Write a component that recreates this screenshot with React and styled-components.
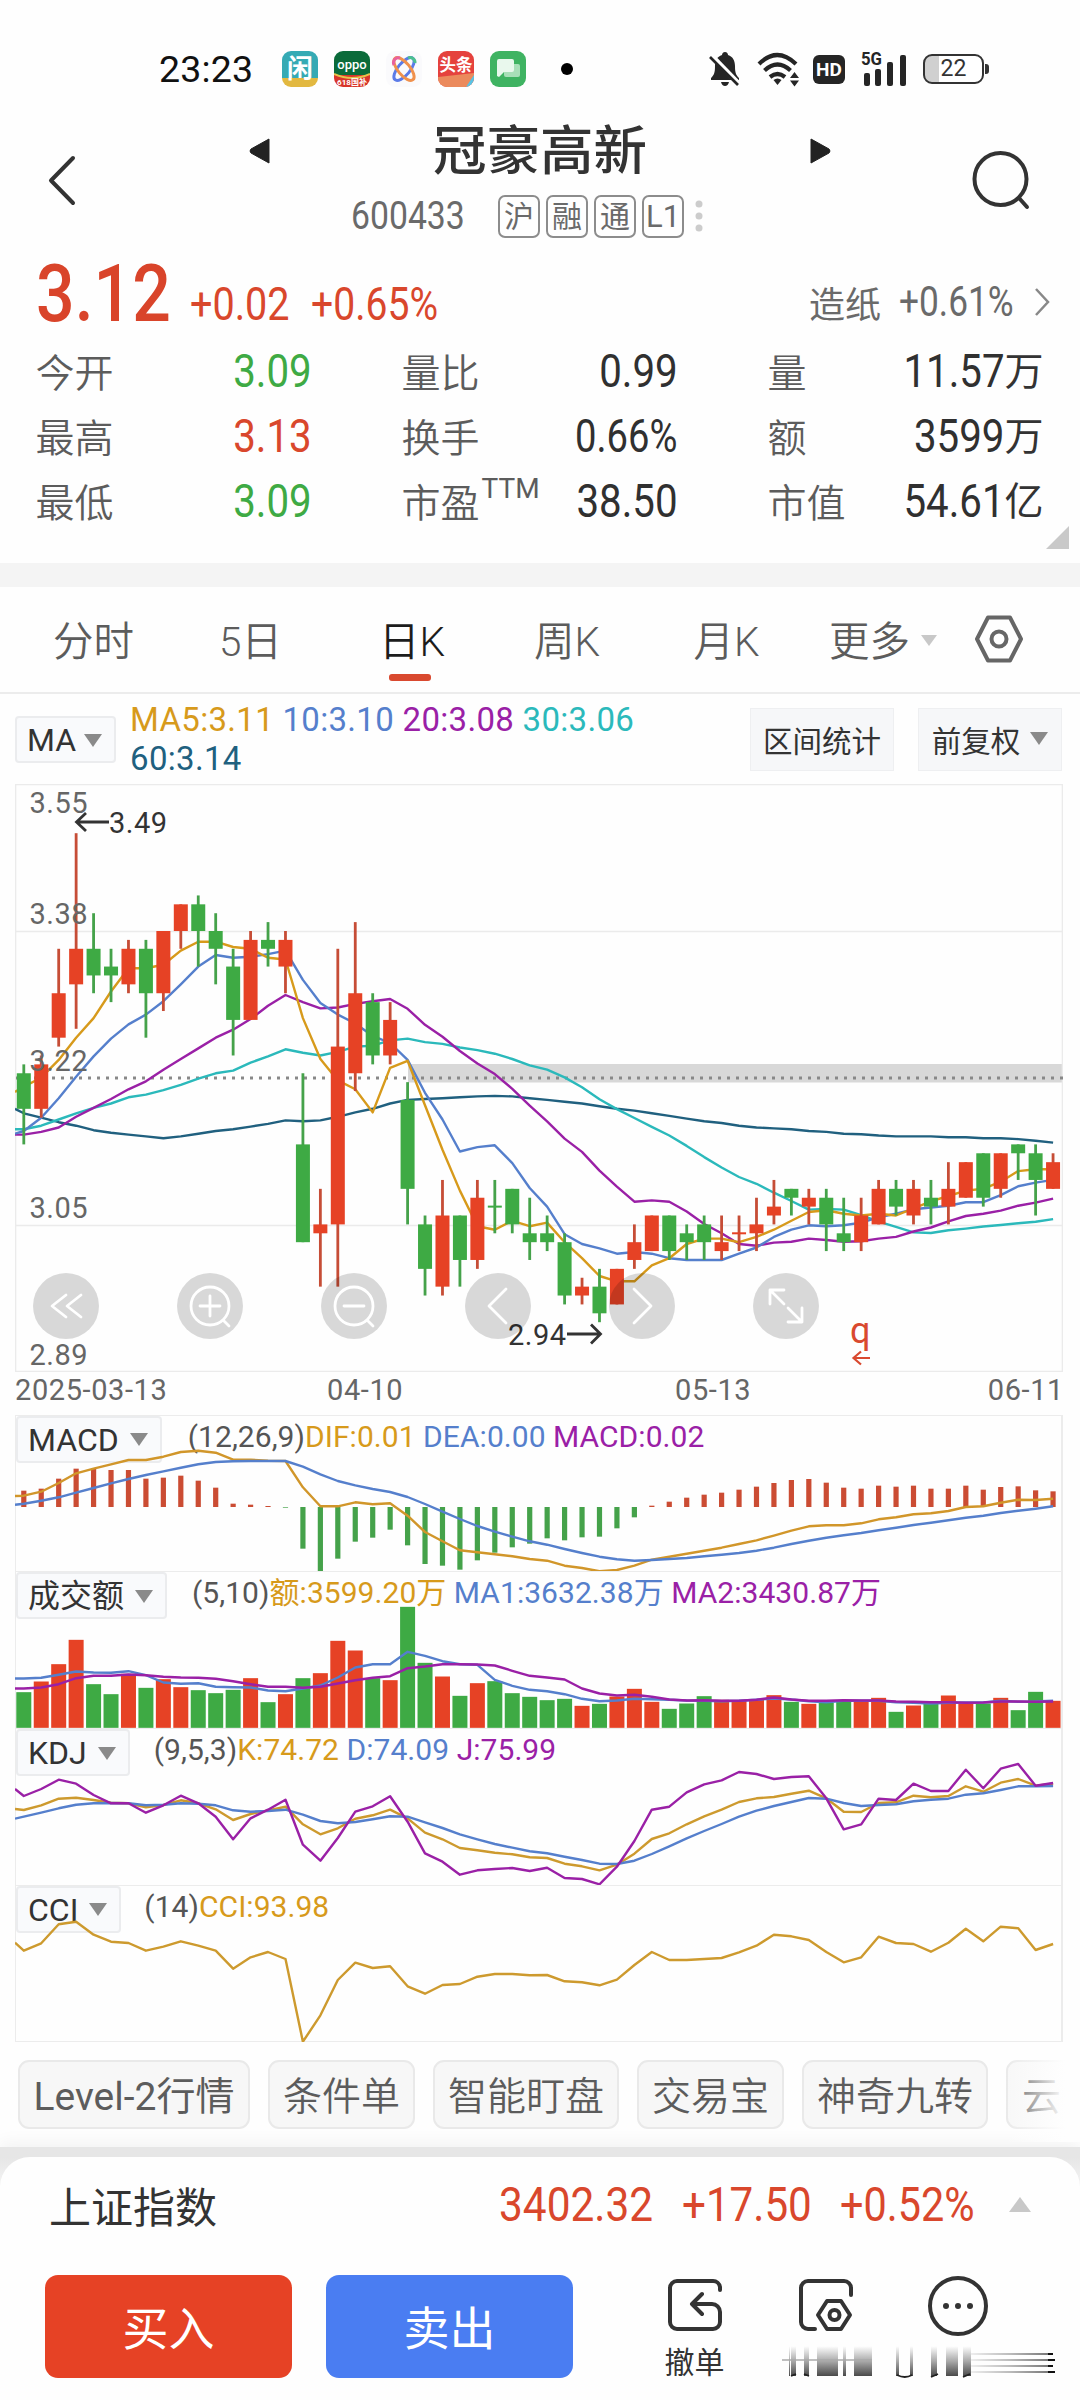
import React from 'react';
import styled, { createGlobalStyle } from 'styled-components';

const RED = '#e64225';
const GREEN = '#3eaa44';
const GOLD = '#d79a1b';
const BLUE = '#557fcc';
const PURPLE = '#9a20a6';
const CYAN = '#2bb9bb';
const NAVY = '#20607f';

const GlobalStyle = createGlobalStyle`
  * {
    box-sizing: border-box;
  }
  body {
    margin: 0;
    background: #fefefe;
    font-family: Roboto, 'Noto Sans CJK SC', sans-serif;
    color: #333;
    white-space: nowrap;
  }
  svg {
    display: block;
    flex: none;
  }
`;

const Page = styled.div`
  display: flex;
  flex-direction: column;
  width: 1080px;
  height: 2400px;
  overflow: hidden;
`;

/* condensed figures */
const Num = styled.span`
  display: block;
  flex: none;
  width: ${p => (p.$w ? `${p.$w}px` : 'auto')};
  font-size: ${p => p.$size || 46}px;
  font-weight: ${p => p.$weight || 400};
  line-height: 1;
  color: ${p => p.$color || '#303030'};
  transform: scaleX(${p => p.$scale || 0.86});
  transform-origin: ${p => (p.$right ? 'right' : 'left')} center;
`;

/* ---------- status bar ---------- */

const StatusBar = styled.div`
  display: flex;
  align-items: center;
  height: 108px;
  padding: 32px 0 2px 159px;
`;

const Clock = styled.div`
  width: 123px;
  font-size: 37.5px;
  letter-spacing: 0.2px;
  color: #111;
`;

const AppIcons = styled.div`
  display: flex;
  gap: 16px;
`;

const AppIcon = styled.div`
  display: flex;
  flex-direction: column;
  align-items: center;
  justify-content: center;
  width: 36px;
  height: 36px;
  border-radius: 9px;
  overflow: hidden;
  background: ${p => p.$bg};
  color: #fff;
  font-size: ${p => p.$size || 20}px;
  font-weight: 700;
  line-height: 1;
`;

const Dot = styled.div`
  width: 12px;
  height: 12px;
  margin: 0 135px 0 35px;
  border-radius: 50%;
  background: #000;
`;

const Hd = styled.div`
  width: 32px;
  height: 29px;
  margin: 0 15px 0 11px;
  border-radius: 6px;
  background: #252525;
  color: #fff;
  font-size: 19px;
  font-weight: 700;
  line-height: 29px;
  text-align: center;
`;

const Battery = styled.div`
  width: 61px;
  height: 30px;
  margin-left: 14px;
  border: 2.5px solid #333;
  border-radius: 9px;
  background: linear-gradient(90deg, #d0d0d0 24%, #fff 24%);
  font-size: 23px;
  line-height: 25px;
  text-align: center;
`;

const BatteryNub = styled.div`
  width: 4px;
  height: 10px;
  margin-left: 1px;
  border-radius: 0 3px 3px 0;
  background: #333;
`;

function Status() {
  return (
    <StatusBar>
      <Clock>23:23</Clock>
      <AppIcons>
        <AppIcon $bg="linear-gradient(#35aab4 76%, #e2b840 76%)" $size={26}>闲</AppIcon>
        <AppIcon $bg="linear-gradient(#0b6b3a 66%, #d8352a 66%)">
          <svg width="36" height="36" viewBox="0 0 36 36">
            <text x="18" y="18" textAnchor="middle" fill="#fff" fontSize="13" fontWeight="500">oppo</text>
            <path d="M0 23q18 8 36 0" stroke="#e5c34a" strokeWidth="2" fill="none" />
            <text x="18" y="34" textAnchor="middle" fill="#fff" fontSize="8">618国补</text>
          </svg>
        </AppIcon>
        <AppIcon $bg="#fafafc">
          <svg width="36" height="36" viewBox="0 0 36 36" fill="none" strokeWidth="3">
            <ellipse cx="18" cy="18" rx="6" ry="14" stroke="#5b7be8" transform="rotate(40 18 18)" />
            <ellipse cx="18" cy="18" rx="6" ry="14" stroke="#f0914d" transform="rotate(-40 18 18)" />
            <path d="M8 14a5 5 0 0 1 6-7" stroke="#e9619c" />
            <path d="M22 7a5 5 0 0 1 7 5" stroke="#4cc08f" />
          </svg>
        </AppIcon>
        <AppIcon $bg="#e5423d">
          <svg width="36" height="36" viewBox="0 0 36 36">
            <text x="18" y="20" textAnchor="middle" fill="#fff" fontSize="16.500" fontWeight="700">头条</text>
            <path d="M0 26l36-4v14H0z" fill="#eb8a5c" />
            <path d="M28 36l8-12v12z" fill="#58c3e6" />
          </svg>
        </AppIcon>
        <AppIcon $bg="#3fb362">
          <svg width="36" height="36" viewBox="0 0 36 36">
            <rect x="14" y="13" width="16" height="13" rx="2" fill="#a8dfb8" />
            <path d="M9 8h13a2 2 0 0 1 2 2v9a2 2 0 0 1-2 2H14l-5 5-2-1V10a2 2 0 0 1 2-2z" fill="#e9f8ed" />
          </svg>
        </AppIcon>
      </AppIcons>
      <Dot />
      <svg width="34" height="36" viewBox="0 0 34 36">
        <path d="M17 1c2 0 3 1.500 3 3 5 1.500 7 6 7 11 0 7 1 9 4 12v2H3v-2c3-3 4-5 4-12 0-5 2-9.500 7-11 0-1.500 1-3 3-3z" fill="#252525" />
        <path d="M13 31h8q-1 4-4 4t-4-4z" fill="#252525" />
        <path d="M3 4l28 29" stroke="#fff" strokeWidth="5" />
        <path d="M2 6l28 28" stroke="#252525" strokeWidth="2.600" />
      </svg>
      <svg width="46" height="36" viewBox="0 0 46 36" style={{ marginLeft: 14 }} fill="none" stroke="#252525" strokeWidth="4.200">
        <path d="M3 13q18-18 37 0" />
        <path d="M8.500 19.500q13-12 26 0" />
        <path d="M14 26q7.500-6 15 0" />
        <path d="M17.500 29l4 5 4-5q-4-3-8 0z" fill="#252525" stroke="none" />
        <path d="M34 27l4.500-6 4.500 6zM34 29.500l4.500 6 4.500-6z" fill="#252525" stroke="none" />
      </svg>
      <Hd>HD</Hd>
      <svg width="50" height="40" viewBox="-2 -2 50 40" fill="#252525" style={{ marginLeft: -1 }}>
        <text x="0" y="14" fontSize="18" fontWeight="700" textLength="21" lengthAdjust="spacingAndGlyphs">5G</text>
        <rect x="3" y="22" width="6" height="13" rx="2" />
        <rect x="14" y="18" width="6" height="17" rx="2" />
        <rect x="26" y="11" width="6" height="24" rx="2" />
        <rect x="39" y="4" width="6" height="31" rx="2" />
      </svg>
      <Battery>22</Battery>
      <BatteryNub />
    </StatusBar>
  );
}

/* ---------- title ---------- */

const TitleBar = styled.div`
  display: flex;
  height: 132px;
  padding: 0 48px 0 46px;
`;

const TitleCenter = styled.div`
  display: flex;
  flex: none;
  flex-direction: column;
  width: 582px;
  margin: 0 139px 0 171px;
`;

const NameRow = styled.div`
  display: flex;
  align-items: center;
  justify-content: space-between;
  height: 86px;
`;

const StockName = styled.div`
  font-family: 'Noto Sans CJK SC', sans-serif;
  font-size: 53.5px;
  font-weight: 500;
  line-height: 76px;
  margin-top: -8px;
`;

const CodeRow = styled.div`
  display: flex;
  align-items: center;
  height: 44px;
  padding-left: 102px;
`;

const Badge = styled.div`
  width: 42px;
  height: 43px;
  margin-right: 6px;
  border: 2px solid #8c8c8c;
  border-radius: 7px;
  color: #6a6a6a;
  font-size: ${p => (p.$latin ? 31 : 30)}px;
  line-height: 39px;
  text-align: center;
`;

function Title() {
  return (
    <TitleBar>
      <svg width="32" height="56" viewBox="0 0 32 56" style={{ marginTop: 45 }}>
        <path d="M27 5L5 27.500 27 50" fill="none" stroke="#333" strokeWidth="4" strokeLinecap="round" strokeLinejoin="round" />
      </svg>
      <TitleCenter>
        <NameRow>
          <svg width="22" height="26" viewBox="0 0 22 26">
            <path d="M20 1v24L2 15q-2-2 0-4z" fill="#222" stroke="#222" strokeLinejoin="round" />
          </svg>
          <StockName>冠豪高新</StockName>
          <svg width="22" height="26" viewBox="0 0 22 26">
            <path d="M2 1v24l18-10q2-2 0-4z" fill="#222" stroke="#222" strokeLinejoin="round" />
          </svg>
        </NameRow>
        <CodeRow>
          <Num $size={39} $w={147} $color="#6a6a6a" $scale={0.865}>600433</Num>
          <Badge>沪</Badge>
          <Badge>融</Badge>
          <Badge>通</Badge>
          <Badge $latin>L1</Badge>
          <svg width="12" height="34" viewBox="0 0 12 34" fill="#ccc" style={{ marginLeft: 3 }}>
            <circle cx="6" cy="5" r="3.500" />
            <circle cx="6" cy="17" r="3.500" />
            <circle cx="6" cy="29" r="3.500" />
          </svg>
        </CodeRow>
      </TitleCenter>
      <svg width="62" height="62" viewBox="0 0 62 62" style={{ marginTop: 41 }} fill="none" stroke="#333" strokeWidth="4" strokeLinecap="round">
        <circle cx="30.500" cy="30" r="26" />
        <path d="M49 49l8 9" />
      </svg>
    </TitleBar>
  );
}

/* ---------- quote ---------- */

const Quote = styled.div`
  height: 323px;
  padding: 0 11px 0 35.5px;
`;

const PriceRow = styled.div`
  display: flex;
  align-items: flex-end;
  height: 87px;
`;

const Industry = styled.div`
  display: flex;
  align-items: center;
  height: 52px;
  margin: 0 17px -1px auto;
  font-size: 36px;
  color: #6a6a6a;
`;

const StatGrid = styled.div`
  display: grid;
  grid-template-columns: repeat(3, 276px);
  grid-auto-rows: 65px;
  column-gap: 90px;
  margin-top: 11px;
`;

const Stat = styled.div`
  display: flex;
  align-items: center;
  justify-content: space-between;
`;

const StatLabel = styled.div`
  margin-top: -2px;
  font-family: 'Noto Sans CJK SC', sans-serif;
  font-size: 39px;
  font-weight: 350;
  line-height: 60px;
  color: #5c5c5c;
  sup {
    margin-left: 2px;
    font-family: Roboto, sans-serif;
    font-size: 28px;
    font-weight: 400;
    line-height: 0;
    vertical-align: 19px;
  }
`;

const StatValue = styled.div`
  display: flex;
  align-items: center;
`;

const Unit = styled.span`
  margin-top: -5px;
  font-size: 39px;
`;

const Corner = styled.div`
  width: 0;
  height: 0;
  margin: -7px 0 0 auto;
  border-left: 23px solid transparent;
  border-bottom: 23px solid #c9c9c9;
`;

const STATS = [
  ['今开', '3.09', '', GREEN],
  ['量比', '0.99', ''],
  ['量', '11.57', '万'],
  ['最高', '3.13', '', '#d9472c'],
  ['换手', '0.66%', ''],
  ['额', '3599', '万'],
  ['最低', '3.09', '', GREEN],
  ['市盈', '38.50', ''],
  ['市值', '54.61', '亿'],
];

function QuotePanel() {
  return (
    <Quote>
      <PriceRow>
        <Num $size={80} $w={154} $weight={500} $color="#d9442a" $scale={0.85} style={{ marginBottom: -7 }}>3.12</Num>
        <Num $w={121} $color="#d9472c">+0.02</Num>
        <Num $color="#d9472c" $scale={0.85}>+0.65%</Num>
        <Industry>
          造纸
          <Num $size={42} $w={135} $color="#6a6a6a" $scale={0.84} style={{ marginLeft: 18 }}>+0.61%</Num>
          <svg width="18" height="32" viewBox="0 0 18 32">
            <path d="M2 3l12 13L2 29" fill="none" stroke="#888" strokeWidth="2.500" />
          </svg>
        </Industry>
      </PriceRow>
      <StatGrid>
        {STATS.map(([label, value, unit, color], i) => (
          <Stat key={i}>
            <StatLabel>
              {label}
              {label === '市盈' && <sup>TTM</sup>}
            </StatLabel>
            <StatValue>
              <Num $right $color={color} $scale={value.endsWith('%') ? 0.83 : 0.875}>{value}</Num>
              {unit && <Unit>{unit}</Unit>}
            </StatValue>
          </Stat>
        ))}
      </StatGrid>
      <Corner />
    </Quote>
  );
}

const Band = styled.div`
  height: 24px;
  background: #f4f4f4;
`;

/* ---------- period tabs ---------- */

const Tabs = styled.div`
  display: flex;
  height: 107px;
  border-bottom: 2px solid #ececec;
`;

const Tab = styled.div`
  display: flex;
  flex: none;
  flex-direction: column;
  align-items: center;
  width: ${p => p.$w}px;
  padding-top: 23px;
  font-size: 40.5px;
  line-height: 64px;
  font-weight: 350;
  color: ${p => (p.$active ? '#1c1c1c' : '#5c5c5c')};
  &::after {
    content: '';
    width: 42px;
    height: 7px;
    margin: 0 5px 0 0;
    border-radius: 3px;
    background: ${p => (p.$active ? '#d9492f' : 'transparent')};
  }
`;

const Triangle = styled.span`
  display: block;
  flex: none;
  width: 0;
  height: 0;
  border-left: ${p => p.$size || 8}px solid transparent;
  border-right: ${p => p.$size || 8}px solid transparent;
  border-top: ${p => (p.$size || 8) * 1.45}px solid ${p => p.$color || '#8a8a8a'};
`;

function PeriodTabs() {
  return (
    <Tabs>
      <Tab $w={187}>分时</Tab>
      <Tab $w={127}>5日</Tab>
      <Tab $w={196} $active>日K</Tab>
      <Tab $w={114}>周K</Tab>
      <Tab $w={205}>月K</Tab>
      <Tab $w={81}>更多</Tab>
      <Triangle style={{ margin: '48px 0 0 11px' }} $color="#c8c8c8" />
      <svg width="50" height="50" viewBox="0 0 50 50" style={{ margin: '27px 0 0 37px' }} fill="none" stroke="#666" strokeWidth="4" strokeLinejoin="round">
        <path d="M14 3.500h22L47 25 36 46.500H14L3 25z" />
        <circle cx="25" cy="25" r="7.500" />
      </svg>
    </Tabs>
  );
}

/* ---------- MA toolbar ---------- */

const MaBar = styled.div`
  display: flex;
  height: 90px;
  padding: 14px 18px 0 15px;
`;

const Tag = styled.div`
  display: flex;
  align-items: center;
  gap: ${p => p.$gap || 11}px;
  height: 47px;
  padding: 1px 12px 0 10px;
  border: 2px solid #ebecee;
  border-radius: 4px;
  background: #f9fafc;
  font-size: 32px;
  line-height: 44px;
`;

const MaValues = styled.div`
  width: 615px;
  margin: -8px 0 0 14px;
  font-size: 33px;
  line-height: 39px;
  letter-spacing: 0.3px;
  white-space: normal;
`;

const Colored = styled.span`
  color: ${p => p.$color};
`;

const SquareButton = styled.div`
  display: flex;
  align-items: center;
  justify-content: center;
  gap: 10px;
  width: 144px;
  height: 63px;
  margin: 0 0 0 auto;
  padding-bottom: 2px;
  border: 1px solid #eeeff1;
  background: #f6f7f9;
  font-size: 29.5px;
  & + & {
    margin-left: 24px;
  }
`;

function MaToolbar() {
  return (
    <MaBar>
      <Tag $gap={8} style={{ marginTop: 8 }}>
        MA <Triangle $size={9} />
      </Tag>
      <MaValues>
        <Colored $color={GOLD}>MA5:3.11</Colored> <Colored $color={BLUE}>10:3.10</Colored>{' '}
        <Colored $color={PURPLE}>20:3.08</Colored> <Colored $color={CYAN}>30:3.06</Colored>
        <br />
        <Colored $color={NAVY}>60:3.14</Colored>
      </MaValues>
      <SquareButton>区间统计</SquareButton>
      <SquareButton>
        前复权 <Triangle $size={9} />
      </SquareButton>
    </MaBar>
  );
}

/* ---------- candles ---------- */

// [rising, high, bodyTop, bodyBottom, low], prices in cents
const CANDLES = [
  [0, 323, 322, 318, 314], [1, 324, 323, 318, 317], [1, 336, 331, 326, 325], [1, 349, 336, 332, 327],
  [0, 340, 336, 333, 331], [0, 336, 334, 333, 330], [1, 337, 336, 332, 331], [0, 337, 336, 331, 326],
  [1, 338, 338, 331, 329], [1, 341, 341, 338, 336], [0, 342, 341, 338, 334], [0, 340, 338, 336, 332],
  [0, 336, 334, 328, 324], [1, 338, 337, 328, 328], [0, 339, 337, 336, 334], [1, 338, 337, 334, 331],
  [0, 322, 314, 303, 303], [1, 309, 305, 304, 298], [1, 336, 325, 305, 298], [1, 339, 331, 322, 320],
  [0, 331, 330, 324, 323], [1, 330, 328, 324, 323], [0, 321, 319, 309, 305], [0, 306, 305, 300, 297],
  [1, 310, 306, 298, 297], [0, 306, 306, 301, 298], [1, 310, 308, 301, 300], [0, 310, 307, 307, 304],
  [0, 309, 309, 305, 304], [0, 308, 304, 303, 301], [0, 306, 304, 303, 302], [0, 304, 303, 297, 296],
  [1, 299, 298, 297, 296], [0, 300, 298, 295, 294], [1, 300, 300, 296, 296], [1, 305, 303, 301, 300],
  [1, 306, 306, 302, 302], [0, 306, 306, 302, 301], [0, 305, 304, 303, 301], [0, 306, 305, 303, 301],
  [1, 306, 303, 302, 301], [1, 306, 304, 304, 302], [1, 308, 305, 304, 302], [1, 310, 307, 306, 305],
  [0, 309, 309, 308, 306], [1, 309, 308, 307, 305], [0, 309, 308, 305, 302], [0, 308, 304, 303, 302],
  [1, 308, 306, 303, 302], [1, 310, 309, 305, 305], [0, 310, 309, 307, 306], [1, 310, 309, 306, 305],
  [0, 310, 308, 307, 305], [1, 312, 309, 307, 305], [1, 312, 312, 308, 308], [0, 313, 313, 308, 307],
  [1, 313, 313, 309, 308], [0, 314, 314, 313, 310], [0, 314, 313, 310, 306], [1, 313, 312, 309, 309],
];

const closes = CANDLES.map(c => (c[0] ? c[2] : c[3]));

// averages before the first visible window is complete
const SEED5 = [319.9, 320.5, 321.5, 323.5, 326];
const SEED10 = [315.2, 315.5, 317, 319.2, 321.6, 323.9, 325.9, 327.5, 328.6, 330.1];
const SEED20 = [
  315.1, 315.1, 315.4, 315.9, 317.1, 318.1, 319.1, 320.2, 321.1, 322.4, 323.6, 324.8, 326, 326.9, 328.1, 329.6, 330.8,
  330, 329.3, 329.4,
];
const SEED30 = [
  315.7, 315.7, 316.1, 316.8, 317.5, 318.1, 318.6, 319.3, 319.6, 320.1, 320.7, 321.4, 322, 322.3, 323.2, 323.9, 324.7,
  324.3, 324, 324.4, 325, 325.1, 325.7, 325.9, 325.5, 325.3, 324.9, 324.6, 324.2, 323.6,
];
const MA60 = [
  318, 317.5, 317, 316.5, 316.1, 315.6, 315.3, 315.1, 314.9, 314.7, 314.9, 315.2, 315.5, 315.7, 316, 316.3, 316.7,
  316.6, 316.7, 317.1, 317.6, 318, 318.6, 319, 319.1, 319.2, 319.3, 319.4, 319.45, 319.4, 319.2, 319, 318.8, 318.6,
  318.3, 318, 317.8, 317.5, 317.2, 316.9, 316.6, 316.4, 316.1, 315.9, 315.8, 315.7, 315.5, 315.4, 315.2, 315.15, 315,
  314.9, 314.9, 314.9, 314.8, 314.8, 314.7, 314.7, 314.6, 314.4, 314.2,
];

function average(n, seed) {
  const out = seed.slice();
  for (let i = n - 1; i < closes.length; i++) {
    out.push(closes.slice(i - n + 1, i + 1).reduce((a, b) => a + b, 0) / n);
  }
  return out;
}

const xAt = i => 8.8 + 17.445 * i;
const priceY = p => 49.2 + (349 - p) * 8.891;

// first value sits on the left edge, the rest on the candles
const toPoints = (values, y) => values.map((v, i) => `${i === 0 ? 0 : xAt(i - 1).toFixed(1)},${y(v).toFixed(1)}`).join(' ');

function Line({ values, y, color, width = 2.4 }) {
  return <polyline points={toPoints(values, y)} fill="none" stroke={color} strokeWidth={width} strokeLinejoin="round" />;
}

const ChartArea = styled.div`
  width: 1048px;
  margin-left: 15px;
`;

const PriceChart = styled.div`
  position: relative;
  height: 588px;
`;

const ToolRow = styled.div`
  position: absolute;
  left: 18px;
  top: 489px;
  display: flex;
  gap: 78px;
`;

const RoundTool = styled.div`
  width: 66px;
  height: 66px;
  border-radius: 50%;
  background: rgba(0, 0, 0, 0.15);
`;

const TOOLS = [
  'M33 22L19 33l14 11M48 22L34 33l14 11',
  'M52 33a19 19 0 1 0-38 0a19 19 0 1 0 38 0M46 47l6 6M23 33h20M33 23v20',
  'M52 33a19 19 0 1 0-38 0a19 19 0 1 0 38 0M46 47l6 6M23 33h20',
  'M41 16L24 33l17 17',
  'M25 16l17 17-17 17',
  'M17 31V17h14M17 17l14 14M35 35l14 14M49 35v14H35',
];

const Dates = styled.div`
  display: flex;
  height: 42.5px;
  padding-top: 4px;
  font-size: 29px;
  line-height: 29px;
  letter-spacing: 0.6px;
  color: #666;
`;

const DateLabel = styled.span`
  width: ${p => (p.$w ? `${p.$w}px` : 'auto')};
  &:last-child {
    margin: 0 -1px 0 auto;
  }
`;

function Candle({ data, i }) {
  const [up, high, top, bottom, low] = data;
  const x = xAt(i);
  const flat = top === bottom;
  const y = priceY(top);
  return (
    <g fill={up ? RED : GREEN}>
      <rect x={x - 1.4} y={priceY(high)} width="2.8" height={priceY(low) - priceY(high)} fill={up ? '#c64d36' : '#45a24a'} />
      <rect x={x - 7} y={flat ? y - 1 : y} width="14" height={flat ? 2 : priceY(bottom) - y} />
    </g>
  );
}

function Price() {
  return (
    <PriceChart>
      <svg width="1048" height="588" viewBox="0 0 1048 588" fontSize="29" letterSpacing="0.5">
        <rect x="393" y="280" width="654" height="18.500" fill="#d8d8d8" />
        <path d="M.5 .5h1047v587H.5zM0 147.500h1048M0 441.500h1048" fill="none" stroke="#ebebeb" strokeWidth="1.600" />
        <path d="M1 294h1047" stroke="#888" strokeWidth="3" strokeDasharray="3 6" />
        <Line values={MA60} y={priceY} color={NAVY} />
        <Line values={average(30, SEED30)} y={priceY} color={CYAN} />
        <Line values={average(20, SEED20)} y={priceY} color={PURPLE} />
        <Line values={average(10, SEED10)} y={priceY} color={BLUE} />
        <Line values={average(5, SEED5)} y={priceY} color={GOLD} />
        {CANDLES.map((c, i) => (
          <Candle key={i} data={c} i={i} />
        ))}
        <g fill="#666">
          <text x="14.500" y="28.500">3.55</text>
          <text x="14.500" y="139.500">3.38</text>
          <text x="14.500" y="286.500">3.22</text>
          <text x="14.500" y="433.500">3.05</text>
          <text x="14.500" y="580.500">2.89</text>
        </g>
        <g fill="#333">
          <text x="94" y="48.500">3.49</text>
          <text x="493" y="560.500">2.94</text>
        </g>
        <g fill="none" stroke="#333" strokeWidth="2.800">
          <path d="M94 38H62M71 29l-9.500 9 9.500 9" />
          <path d="M552 550h33M576 540.500l9.500 9.500-9.500 9.500" />
        </g>
        <text x="835" y="559" fill="#d9492f" fontSize="36">q</text>
        <path d="M855 574h-16M846 567.500l-7.500 6.500 7.500 6.500" fill="none" stroke="#d9492f" strokeWidth="2.200" />
      </svg>
      <ToolRow>
        {TOOLS.map((d, i) => (
          <RoundTool key={i}>
            <svg width="66" height="66" viewBox="0 0 66 66">
              <path d={d} fill="none" stroke="#fff" strokeWidth="2.800" strokeLinecap="round" strokeLinejoin="round" />
            </svg>
          </RoundTool>
        ))}
      </ToolRow>
    </PriceChart>
  );
}

/* ---------- indicators ---------- */

// indicator samples are kept in thirds of a pixel
const MACD_BARS = [
  270, 264, 234, 204, 203, 208, 208, 234, 231, 225, 240, 261, 309, 312, 316, 321, 444, 511, 474, 423, 411, 387, 434,
  490, 495, 507, 479, 456, 440, 429, 413, 419, 410, 408, 383, 350, 315, 303, 291, 282, 276, 267, 258, 247, 238, 235,
  246, 261, 264, 255, 258, 255, 264, 264, 255, 267, 259, 257, 269, 272,
];
const DIF = [
  286, 285, 273, 247, 218, 204, 191, 178, 178, 168, 154, 150, 156, 177, 177, 180, 181, 260, 317, 317, 305, 311, 308,
  345, 394, 422, 449, 455, 461, 467, 475, 480, 495, 502, 512, 508, 495, 477, 468, 459, 450, 441, 430, 419, 405, 390,
  377, 374, 374, 368, 356, 350, 341, 338, 331, 319, 317, 306, 297, 298, 294,
];
const DEA = [
  312, 309, 300, 290, 276, 262, 248, 235, 223, 212, 201, 191, 184, 182, 181, 181, 181, 198, 221, 241, 254, 265, 274,
  289, 310, 333, 355, 376, 393, 408, 422, 432, 445, 457, 468, 476, 480, 478, 475, 472, 467, 462, 457, 450, 441, 430,
  420, 411, 404, 397, 389, 381, 373, 366, 359, 351, 345, 337, 330, 324, 317,
];
const VOLUME = [
  877, 845, 793, 720, 853, 883, 822, 864, 838, 862, 871, 880, 870, 835, 907, 883, 835, 820, 723, 752, 835, 841, 621,
  789, 830, 888, 850, 844, 880, 891, 901, 897, 918, 912, 890, 867, 906, 927, 911, 889, 900, 903, 900, 886, 906, 912,
  909, 906, 906, 894, 936, 917, 912, 887, 912, 911, 894, 931, 876, 903,
];
const VOL_MA1 = [
  836, 836, 834, 825, 815, 818, 819, 814, 826, 848, 852, 850, 861, 862, 863, 872, 874, 866, 857, 833, 803, 793, 793,
  756, 768, 784, 793, 795, 840, 858, 870, 874, 883, 897, 904, 902, 897, 898, 900, 902, 903, 904, 903, 900, 896, 899,
  904, 907, 903, 903, 903, 907, 909, 911, 909, 908, 908, 903, 906, 905, 903,
];
const VOL_MA2 = [
  866, 866, 863, 853, 835, 828, 828, 824, 826, 831, 833, 834, 837, 844, 853, 861, 861, 864, 861, 851, 841, 834, 829,
  805, 800, 793, 793, 794, 797, 813, 828, 833, 839, 866, 881, 887, 885, 891, 899, 902, 901, 903, 903, 900, 893, 899,
  903, 903, 901, 902, 902, 905, 906, 907, 907, 909, 908, 905, 905, 906, 905,
];
const K = [
  267, 270, 256, 236, 233, 240, 248, 250, 262, 255, 241, 250, 268, 300, 282, 271, 260, 313, 343, 325, 296, 286, 269,
  295, 338, 358, 384, 391, 398, 403, 412, 414, 431, 439, 451, 434, 401, 357, 340, 313, 289, 269, 246, 235, 231, 221,
  212, 235, 275, 276, 249, 247, 227, 232, 228, 199, 215, 188, 177, 197, 191,
];
const D = [
  296, 290, 278, 265, 254, 250, 249, 250, 256, 254, 250, 251, 256, 271, 275, 273, 269, 284, 303, 310, 306, 298, 289,
  290, 307, 324, 343, 358, 372, 383, 394, 400, 410, 420, 431, 432, 422, 402, 379, 355, 333, 312, 290, 272, 258, 246,
  234, 236, 249, 258, 255, 253, 244, 239, 236, 224, 220, 210, 199, 199, 198,
];
const J = [
  207, 228, 207, 179, 191, 225, 250, 250, 278, 256, 227, 250, 290, 358, 295, 269, 239, 374, 422, 354, 275, 259, 229,
  305, 400, 425, 464, 451, 447, 444, 453, 443, 474, 477, 493, 440, 363, 269, 260, 217, 193, 181, 156, 162, 177, 171,
  169, 235, 328, 313, 236, 240, 191, 213, 213, 149, 205, 146, 132, 197, 189,
];
const CCI = [
  667, 691, 669, 612, 604, 643, 664, 668, 691, 679, 663, 676, 691, 745, 711, 695, 716, 964, 885, 779, 727, 743, 738,
  798, 820, 794, 791, 769, 761, 761, 765, 764, 783, 786, 795, 778, 734, 695, 719, 719, 716, 713, 696, 676, 643, 648,
  659, 695, 726, 711, 649, 668, 671, 694, 667, 625, 663, 619, 624, 689, 671,
];

const macdY = v => (v - 43) / 3;
const volY = v => (v - 513.5) / 3;
const kdjY = v => (v - 24) / 3;
const cciY = v => (v - 494) / 3;

const IndicatorBox = styled.div`
  position: relative;
  height: 156.8px;
  border: 1px solid #ececec;
  border-bottom: 0;
  border-right-width: 2px;
  &:last-child {
    border-bottom: 1px solid #ececec;
  }
  & > svg {
    position: absolute;
    left: -1px;
    top: -1px;
  }
`;

const IndicatorHead = styled.div`
  display: flex;
  align-items: flex-start;
`;

const IndicatorInfo = styled.div`
  margin-left: ${p => p.$gap || 25}px;
  font-size: 30px;
  line-height: 41px;
  letter-spacing: 0.05px;
  color: #555;
`;

function Indicator({ name, params, values, gap, children }) {
  return (
    <IndicatorBox>
      <IndicatorHead>
        <Tag>
          {name} <Triangle $size={9} />
        </Tag>
        <IndicatorInfo $gap={gap}>
          {params}
          {values.map(([text, color]) => (
            <Colored key={text} $color={color}>{`${text} `}</Colored>
          ))}
        </IndicatorInfo>
      </IndicatorHead>
      <svg width="1048" height="157" viewBox="0 0 1048 157">
        {children}
      </svg>
    </IndicatorBox>
  );
}

function Indicators() {
  return (
    <div>
      <Indicator name="MACD" params="(12,26,9)" gap={26} values={[['DIF:0.01', GOLD], ['DEA:0.00', BLUE], ['MACD:0.02', PURPLE]]}>
        {MACD_BARS.map((v, i) => (
          <rect
            key={i}
            x={xAt(i) - 2.6}
            y={macdY(Math.min(v, 319))}
            width="5.2"
            height={Math.abs(v - 319) / 3}
            fill={v < 319 ? '#cb4c33' : '#45a24a'}
          />
        ))}
        <Line values={DIF} y={macdY} color="#d1962a" />
        <Line values={DEA} y={macdY} color={BLUE} />
      </Indicator>
      <Indicator
        name="成交额"
        params="(5,10)"
        values={[['额:3599.20万', GOLD], ['MA1:3632.38万', BLUE], ['MA2:3430.87万', PURPLE]]}
      >
        {VOLUME.map((v, i) => (
          <rect key={i} x={xAt(i) - 7.5} y={volY(v)} width="15" height={volY(984) - volY(v)} fill={CANDLES[i][0] ? RED : GREEN} />
        ))}
        <Line values={VOL_MA1} y={volY} color={BLUE} />
        <Line values={VOL_MA2} y={volY} color={PURPLE} />
      </Indicator>
      <Indicator name="KDJ" params="(9,5,3)" gap={24} values={[['K:74.72', GOLD], ['D:74.09', BLUE], ['J:75.99', PURPLE]]}>
        <Line values={K} y={kdjY} color="#cd9a2e" />
        <Line values={D} y={kdjY} color={BLUE} />
        <Line values={J} y={kdjY} color={PURPLE} />
      </Indicator>
      <Indicator name="CCI" params="(14)" gap={23} values={[['CCI:93.98', GOLD]]}>
        <Line values={CCI} y={cciY} color="#cd9a2e" />
      </Indicator>
    </div>
  );
}

/* ---------- feature chips ---------- */

const Chips = styled.div`
  position: relative;
  display: flex;
  gap: 18px;
  height: 105px;
  padding: 18px 0 0 18px;
  overflow: hidden;
  &::after {
    content: '';
    position: absolute;
    right: 0;
    top: 0;
    width: 76px;
    height: 100px;
    background: linear-gradient(90deg, rgba(254, 254, 254, 0), #fefefe 80%);
  }
`;

const Chip = styled.div`
  flex: none;
  width: ${p => p.$w}px;
  height: 69px;
  border: 2px solid #e9e9e9;
  border-radius: 11px;
  background: #f7f7f7;
  color: #5c5c5c;
  font-size: 39px;
  line-height: 71px;
  font-weight: ${p => (p.$latin ? 400 : 350)};
  text-align: center;
`;

/* ---------- bottom sheet ---------- */

const SheetWrap = styled.div`
  flex: 1;
  padding-top: 10px;
  background: linear-gradient(#e6e6e6 10px, #f4f4f4 40px);
  box-shadow: 0 -4px 16px rgba(0, 0, 0, 0.05);
`;

const Sheet = styled.div`
  height: 100%;
  padding: 0 45px;
  border-radius: 30px 30px 0 0;
  background: #fefefe;
`;

const IndexRow = styled.div`
  display: flex;
  align-items: center;
  height: 95px;
  padding-left: 4px;
`;

const IndexName = styled.div`
  width: 450px;
  font-size: 42px;
`;

const Actions = styled.div`
  display: flex;
  padding-top: 23px;
`;

const TradeButton = styled.div`
  flex: none;
  width: 247px;
  height: 103px;
  margin-right: 34px;
  border-radius: 13px;
  background: ${p => p.$bg};
  color: #fff;
  font-size: 46px;
  line-height: 109px;
  text-align: center;
`;

const ActionItem = styled.div`
  display: flex;
  flex: none;
  flex-direction: column;
  align-items: center;
  width: ${p => p.$w}px;
  font-size: 30px;
  line-height: 40px;
  svg {
    margin-bottom: 8px;
  }
`;

// vertical strokes of the garbled caption: [x, width]
const SMEAR = [[7, 1], [9, 5], [22, 5], [35, 21], [61, 3], [72, 18], [114, 3], [128, 3], [149, 6], [164, 12], [181, 8]];

const IconGroup = styled.div`
  display: flex;
  flex: none;
  flex-direction: column;
`;

const IconRow = styled.div`
  display: flex;
`;

function BottomSheet() {
  return (
    <SheetWrap>
      <Sheet>
        <IndexRow>
          <IndexName>上证指数</IndexName>
          <Num $size={49} $w={183} $color="#d9472c" $scale={0.865}>3402.32</Num>
          <Num $size={49} $w={158} $color="#d9472c">+17.50</Num>
          <Num $size={49} $w={169} $color="#d9472c" $scale={0.845}>+0.52%</Num>
          <Triangle $color="#c8c8c8" style={{ transform: 'rotate(180deg)' }} $size={11} />
        </IndexRow>
        <Actions>
          <TradeButton $bg={RED}>买入</TradeButton>
          <TradeButton $bg="#4a7df2">卖出</TradeButton>
          <ActionItem $w={175}>
            <svg width="56" height="60" viewBox="0 0 56 60" fill="none" stroke="#333" strokeWidth="4" strokeLinecap="round" strokeLinejoin="round">
              <path d="M53 15V12a7 7 0 0 0-7-6H10a7 7 0 0 0-7 7v34a7 7 0 0 0 7 7h36a7 7 0 0 0 7-7V37a8 8 0 0 0-8-8H26M35 19L25 29l10 10" />
            </svg>
            撤单
          </ActionItem>
          <IconGroup>
            <IconRow>
              <svg width="56" height="60" viewBox="0 0 56 60" style={{ marginLeft: 16 }} fill="none" stroke="#333" strokeWidth="4" strokeLinecap="round" strokeLinejoin="round">
                <path d="M53 20V13a7 7 0 0 0-7-7H10a7 7 0 0 0-7 7v34a7 7 0 0 0 7 7h7" />
                <path d="M29 26h14l9 14-9 14H29L20 40z" />
                <circle cx="36.500" cy="40" r="5" />
              </svg>
              <svg width="62" height="62" viewBox="0 0 62 62" style={{ marginLeft: 73 }} fill="none" stroke="#333" strokeWidth="4">
                <circle cx="31" cy="31" r="28" />
                <g fill="#333" stroke="none">
                  <circle cx="19" cy="31" r="3" />
                  <circle cx="31" cy="31" r="3" />
                  <circle cx="43" cy="31" r="3" />
                </g>
              </svg>
            </IconRow>
            <svg width="276" height="36" viewBox="0 0 276 36" style={{ marginTop: 8 }}>
              <defs>
                <linearGradient id="down" x1="0" y1="0" x2="0" y2="1">
                  <stop offset="0" stopColor="#fff" />
                  <stop offset="0.500" stopColor="#aaa" />
                  <stop offset="1" stopColor="#4a4a4a" />
                </linearGradient>
                <linearGradient id="across" x1="0" y1="0" x2="1" y2="0">
                  <stop offset="0" stopColor="#eee" />
                  <stop offset="0.500" stopColor="#bbb" />
                  <stop offset="1" stopColor="#777" />
                </linearGradient>
              </defs>
              {SMEAR.map(([x, w]) => (
                <rect key={x} x={x} y="1" width={w} height="30" fill="url(#down)" />
              ))}
              <path d="M115 30q8 4 15 0M9 31l5-2M22 29l5 2M149 32l7-3M181 32l7-3" fill="none" stroke="#222" strokeWidth="1.800" />
              <path d="M0 15h90" stroke="#aaa" strokeWidth="1.500" />
              {[9, 15, 21, 27].map((y, i) => (
                <g key={y}>
                  <rect x="189" y={y - 1} width="78" height="2" fill="url(#across)" />
                  <rect x="266" y={y - 1} width={i % 2 ? 7 : 5} height="2" fill="#111" />
                </g>
              ))}
            </svg>
          </IconGroup>
        </Actions>
      </Sheet>
    </SheetWrap>
  );
}

export default function App() {
  return (
    <Page>
      <GlobalStyle />
      <Status />
      <Title />
      <QuotePanel />
      <Band />
      <PeriodTabs />
      <MaToolbar />
      <ChartArea>
        <Price />
        <Dates>
          <DateLabel $w={312}>2025-03-13</DateLabel>
          <DateLabel $w={348}>04-10</DateLabel>
          <DateLabel $w={80}>05-13</DateLabel>
          <DateLabel>06-11</DateLabel>
        </Dates>
        <Indicators />
      </ChartArea>
      <Chips>
        <Chip $w={232} $latin>Level-2行情</Chip>
        <Chip $w={147}>条件单</Chip>
        <Chip $w={186}>智能盯盘</Chip>
        <Chip $w={147}>交易宝</Chip>
        <Chip $w={186}>神奇九转</Chip>
        <Chip $w={150} style={{ textAlign: 'left', paddingLeft: 14 }}>云</Chip>
      </Chips>
      <BottomSheet />
    </Page>
  );
}
